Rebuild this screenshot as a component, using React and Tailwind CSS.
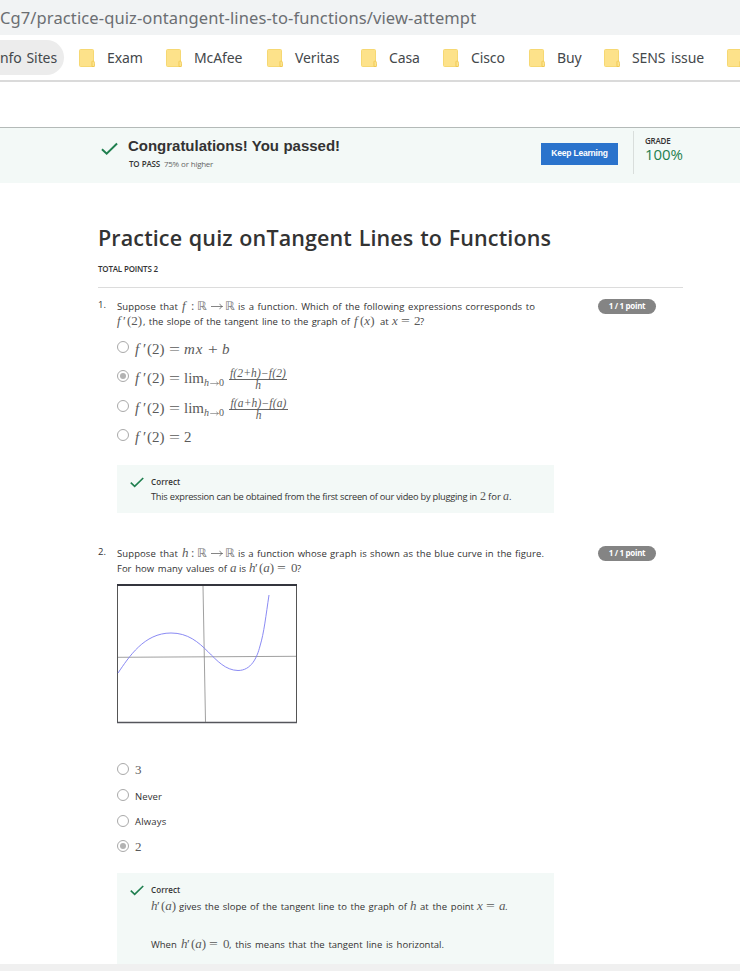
import React from "react";
import clsx from "clsx";

/* A run of words spread over a given width. */
const T = ({ w, className, children }) => (
  <span className={clsx("block shrink-0 whitespace-nowrap [text-align-last:justify]", w, className)}>{children}</span>
);

/* A math symbol: roman by default, italic for variables. */
const M = ({ w, i, className, children }) => (
  <span className={clsx("block shrink-0 whitespace-nowrap font-['Liberation_Serif',serif] text-[#5a5a5a]", i && "italic", w, className)}>
    {children}
  </span>
);

const R = ({ w }) => (
  <span className={clsx("-ml-px block shrink-0 font-['DejaVu_Sans',sans-serif] text-[12px] text-[#777]", w)}>ℝ</span>
);

const Arrow = ({ className }) => (
  <svg className={clsx("block shrink-0", className)} viewBox="0 0 12 7" fill="none" stroke="#666" strokeWidth="0.8">
    <path d="M0 3.5H11.5M8.8 0.8C9.3 2.4 10.2 3.1 11.5 3.5C10.2 3.9 9.3 4.6 8.8 6.2" />
  </svg>
);

const Line = ({ className, children }) => (
  <div className={clsx("flex items-baseline h-[15px] leading-[15px]", className)}>{children}</div>
);

const Check = ({ className }) => (
  <svg className={clsx("block shrink-0", className)} viewBox="0 0 18 14" fill="none" stroke="#1f7f4f" strokeWidth="2.1">
    <path d="M1 7.2L6 12L17 1.2" />
  </svg>
);

const Radio = ({ on }) => (
  <span className="flex size-[12px] shrink-0 items-center justify-center rounded-full border border-[#a9a9a9] bg-white">
    {on && <span className="size-[6px] rounded-full bg-[#b3b3b3]" />}
  </span>
);

const Option = ({ on, className = "h-[29px]", children }) => (
  <div className={clsx("flex items-start", className)}>
    <Radio on={on} />
    <div className="ml-[6px] flex items-baseline">{children}</div>
  </div>
);

const FPrime = () => (
  <>
    <M i w="w-[8px]">f</M>
    <M w="w-[4px]">′</M>
    <M w="w-[22px]">(2)</M>
    <M w="w-[15px]" className="origin-left scale-x-130">=</M>
  </>
);

const Limit = () => (
  <>
    <M w="w-[20px]">lim</M>
    <span className="flex w-[25px] items-center self-end pb-[3px]">
      <M i w="w-[6px]" className="text-[10px] leading-[8px]">h</M>
      <Arrow className="h-[5px] w-[9px]" />
      <M w="w-[6px]" className="text-[10px] leading-[8px]">0</M>
    </span>
  </>
);

const Fraction = ({ children, w }) => (
  <span className={clsx("-mt-[2px] flex shrink-0 flex-col items-center self-start font-['Liberation_Serif',serif] text-[11.5px] italic text-[#5a5a5a]", w)}>
    <span className="flex h-[12px] w-full justify-center whitespace-nowrap border-b border-[#666] leading-[11px] tracking-[0.15px]">{children}</span>
    <span className="h-[10px] leading-[10px]">h</span>
  </span>
);

const Points = () => (
  <div className="flex h-[15px] w-[58px] items-start justify-center rounded-full bg-[#848484] font-['Open_Sans',sans-serif] text-[8px] font-bold leading-[14px] tracking-[-0.3px] text-white">
    1 / 1 point
  </div>
);

const Folder = () => (
  <svg className="block h-[18px] w-[16px] shrink-0" viewBox="0 0 16 18">
    <rect x="0.5" y="0.5" width="14" height="17" rx="1" fill="#fde28a" stroke="#f6d873" />
    <path d="M13 17.5V13.2C13 12 14 11.5 14.8 12.2C15.5 13 15.6 15.5 15.3 17.5Z" fill="#fde793" stroke="#efc54c" strokeWidth="0.9" />
  </svg>
);

const Bookmark = ({ w, tw, children }) => (
  <div className={clsx("flex shrink-0 items-center", w)}>
    <Folder />
    <T w={tw} className="ml-[12px]">{children}</T>
  </div>
);

export default function App() {
  return (
    <div className="flex h-[971px] w-[740px] flex-col overflow-hidden bg-white font-['Open_Sans',sans-serif] text-[#333]">
      <div className="flex h-[35px] shrink-0 items-center bg-[#f1f3f4] pt-[2px] font-['Noto_Sans',sans-serif] text-[16.5px] text-[#6b6e72]">
        <T w="w-[477px]" className="tracking-[0.11px]">Cg7/practice-quiz-ontangent-lines-to-functions/view-attempt</T>
      </div>
      <div className="flex h-[47px] shrink-0 items-center border-b-2 border-[#dadada] font-['Noto_Sans',sans-serif] text-[14px] tracking-[-0.1px] text-[#44484b]">
        <div className="mr-[15px] flex h-[35px] w-[64px] shrink-0 items-center rounded-r-full bg-[#ececec]">
          <T w="w-[57px]">nfo Sites</T>
        </div>
        <Bookmark w="w-[87px]" tw="w-[35px]">Exam</Bookmark>
        <Bookmark w="w-[101px]" tw="w-[50px]">McAfee</Bookmark>
        <Bookmark w="w-[94px]" tw="w-[44px]">Veritas</Bookmark>
        <Bookmark w="w-[82px]" tw="w-[32px]">Casa</Bookmark>
        <Bookmark w="w-[86px]" tw="w-[35px]">Cisco</Bookmark>
        <Bookmark w="w-[75px]" tw="w-[25px]">Buy</Bookmark>
        <Bookmark w="w-[123px]" tw="w-[72px]">SENS issue</Bookmark>
        <Folder />
      </div>
      <div className="h-[45px] shrink-0" />
      <header className="flex h-[56px] shrink-0 items-start border-t border-[#b4bab8] bg-[#f3f9f7] pl-[101px]">
        <Check className="mt-[14px] h-[14px] w-[17px]" />
        <div className="ml-[10px] w-[413px] pt-[7px]">
          <T w="w-[212px]" className="font-['Liberation_Sans',sans-serif] text-[15px] font-bold leading-[22px] tracking-[-0.02px]">
            Congratulations! You passed!
          </T>
          <div className="ml-[1px] mt-px flex text-[8px] leading-[11px]">
            <T w="w-[31px]" className="font-semibold tracking-[-0.2px]">TO PASS</T>
            <T w="w-[49px]" className="ml-[4px] text-[#666] tracking-[-0.3px]">75% or higher</T>
          </div>
        </div>
        <button className="mt-[15px] flex h-[22px] w-[77px] items-start justify-center bg-[#2a73cc] font-['Liberation_Sans',sans-serif] text-[8.5px] font-bold leading-[21px] tracking-[-0.2px] text-white">
          Keep Learning
        </button>
        <div className="ml-[15px] mt-[3px] h-[43px] w-px bg-[#d9dedc]" />
        <div className="ml-[11px] pt-[7px]">
          <div className="h-[11px] text-[8px] font-semibold leading-[11px] tracking-[-0.2px]">GRADE</div>
          <div className="h-[17px] text-[15px] leading-[17px] tracking-[-0.1px] text-[#1f7f4f]">100%</div>
        </div>
      </header>

      <main className="flex h-[781px] shrink-0 flex-col pl-[98px]">
        <h1 className="mt-[40px] h-[30px]">
          <T w="w-[453px]" className="text-[21.5px] font-semibold leading-[30px] tracking-[0.12px]">Practice quiz onTangent Lines to Functions</T>
        </h1>
        <T w="w-[60px]" className="mt-[10px] h-[11px] text-[8px] font-semibold leading-[11px] tracking-[-0.2px]">TOTAL POINTS 2</T>
        <div className="mt-[13px] h-px w-[585px] shrink-0 bg-[#dcdcdc]" />

        <section className="flex h-[247px] shrink-0 pt-[11px] text-[9.5px]">
          <div className="w-[19px] leading-[12px]">1.</div>
          <div className="-mt-px w-[481px]">
            <Line>
              <T w="w-[61px]" className="tracking-[0.1px]">Suppose that</T>
              <M i w="w-[9px]" className="ml-[4px] text-[13px]">f</M>
              <M w="w-[7px]" className="text-[12px]">:</M>
              <R w="w-[14px]" />
              <Arrow className="h-[7px] w-[12px]" />
              <span className="w-[3px]" />
              <R w="w-[12px]" />
              <T w="w-[297px]" className="ml-px tracking-[0.1px]">is a function. Which of the following expressions corresponds to</T>
            </Line>
            <Line>
              <M i w="w-[6px]" className="text-[13px]">f</M>
              <M w="w-[4px]" className="text-[13px]">′</M>
              <M w="w-[16px]" className="text-[13px]">(2)</M>
              <T w="w-[207px]">, the slope of the tangent line to the graph of</T>
              <M i w="w-[6px]" className="ml-[4px] text-[13px]">f</M>
              <M w="w-[17px]" className="text-[13px]">(<i>x</i>)</M>
              <T w="w-[9px]" className="ml-[3px]">at</T>
              <M i w="w-[9px]" className="ml-[3px] text-[13px]">x</M>
              <M w="w-[13px]" className="origin-left scale-x-120 text-[13px]">=</M>
              <M w="w-[6px]" className="text-[13px]">2</M>
              <T w="w-[5px]">?</T>
            </Line>
            <div className="mt-[13px] flex flex-col text-[15px] leading-[16px]">
              <Option><FPrime /><M i w="w-[24px]" className="tracking-[1px]">mx</M><M w="w-[14px]" className="origin-left scale-x-115">+</M><M i w="w-[8px]">b</M></Option>
              <Option on className="h-[30px]">
                <FPrime />
                <Limit />
                <Fraction w="w-[58px]">f(2+h)−f(2)</Fraction>
              </Option>
              <Option>
                <FPrime />
                <Limit />
                <Fraction w="w-[59px]">f(a+h)−f(a)</Fraction>
              </Option>
              <Option><FPrime /><M w="w-[8px]">2</M></Option>
            </div>
            <div className="mt-[7px] flex h-[48px] w-[437px] bg-[#f3f9f7] pl-[13px] pt-[12px]">
              <Check className="h-[11px] w-[14px]" />
              <div className="ml-[7px]">
                <div className="-mt-px h-[13px] text-[8px] font-semibold leading-[11px] tracking-[0.1px]">Correct</div>
                <Line>
                  <T w="w-[326px]" className="text-[9.25px] tracking-[-0.25px]">This expression can be obtained from the first screen of our video by plugging in</T>
                  <M w="w-[6px]" className="ml-[3px] text-[12px]">2</M>
                  <T w="w-[13px]" className="ml-[2px]">for</T>
                  <M i w="w-[6px]" className="ml-[2px] text-[12px]">a</M>
                  <T w="w-[3px]">.</T>
                </Line>
              </div>
            </div>
          </div>
          <Points />
        </section>

        <section className="flex shrink-0 pt-[11px] text-[9.5px]">
          <div className="w-[19px] leading-[12px]">2.</div>
          <div className="-mt-px w-[481px]">
            <Line>
              <T w="w-[61px]" className="tracking-[0.1px]">Suppose that</T>
              <M i w="w-[9px]" className="ml-[4px] text-[13px]">h</M>
              <M w="w-[7px]" className="text-[12px]">:</M>
              <R w="w-[14px]" />
              <Arrow className="h-[7px] w-[12px]" />
              <span className="w-[3px]" />
              <R w="w-[12px]" />
              <T w="w-[306px]" className="ml-px tracking-[0.1px]">is a function whose graph is shown as the blue curve in the figure.</T>
            </Line>
            <Line>
              <T w="w-[110px]">For how many values of</T>
              <M i w="w-[6px]" className="ml-[3px] text-[13px]">a</M>
              <T w="w-[7px]" className="ml-[3px]">is</T>
              <M i w="w-[6px]" className="ml-[3px] text-[13px]">h</M>
              <M w="w-[4px]" className="text-[13px]">′</M>
              <M w="w-[18px]" className="text-[13px]">(<i>a</i>)</M>
              <M w="w-[14px]" className="origin-left scale-x-120 text-[13px]">=</M>
              <M w="w-[6px]" className="text-[13px]">0</M>
              <T w="w-[5px]">?</T>
            </Line>
            <svg className="mt-[9px] block h-[141px] w-[180px]" viewBox="0 0 180 141" fill="none">
              <path d="M0.5 1V139M179.5 1V139" stroke="#555" />
              <path d="M0 1H180" stroke="#34353d" strokeWidth="2" />
              <path d="M0 138.5H180" stroke="#55565c" strokeWidth="1.6" />
              <path d="M1 73.3L179 72.3M86 2L88.5 138" stroke="#888" strokeWidth="0.8" />
              <path d="M1 89C12 73 27 49 54 49C88 49 96 86 121 86.500C134 86.500 140 74 143 62C147 49 149 31 152 11" stroke="#7d7df2" strokeWidth="0.9" />
            </svg>
            <div className="mt-[38px] flex flex-col text-[9.5px] leading-[14px]">
              <Option className="h-[26px]"><M className="text-[13px]" w="w-[7px]">3</M></Option>
              <Option className="h-[26px]"><T w="w-[28px]" className="mt-px tracking-[0.1px]">Never</T></Option>
              <Option className="h-[25px]"><T w="w-[32px]" className="tracking-[0.2px]">Always</T></Option>
              <Option on className="h-[26px]"><M className="text-[13px]" w="w-[7px]">2</M></Option>
            </div>
            <div className="mt-[7px] flex h-[92px] w-[437px] bg-[#f3f9f7] pl-[13px] pt-[12px]">
              <Check className="h-[11px] w-[14px]" />
              <div className="ml-[7px]">
                <div className="-mt-px h-[14px] text-[8px] font-semibold leading-[11px] tracking-[0.1px]">Correct</div>
                <Line className="mb-[23px]">
                  <M i w="w-[6px]" className="text-[13px]">h</M>
                  <M w="w-[4px]" className="text-[13px]">′</M>
                  <M w="w-[15px]" className="text-[13px]">(<i>a</i>)</M>
                  <T w="w-[228px]" className="ml-[3px]">gives the slope of the tangent line to the graph of</T>
                  <M i w="w-[7px]" className="ml-[3px] text-[13px]">h</M>
                  <T w="w-[54px]" className="ml-[3px]">at the point</T>
                  <M i w="w-[9px]" className="ml-[3px] text-[13px]">x</M>
                  <M w="w-[13px]" className="origin-left scale-x-120 text-[13px]">=</M>
                  <M i w="w-[6px]" className="text-[13px]">a</M>
                  <T w="w-[3px]">.</T>
                </Line>
                <Line>
                  <T w="w-[27px]">When</T>
                  <M i w="w-[6px]" className="ml-[3px] text-[13px]">h</M>
                  <M w="w-[4px]" className="text-[13px]">′</M>
                  <M w="w-[18px]" className="text-[13px]">(<i>a</i>)</M>
                  <M w="w-[14px]" className="origin-left scale-x-120 text-[13px]">=</M>
                  <M w="w-[6px]" className="text-[13px]">0</M>
                  <T w="w-[215px]">, this means that the tangent line is horizontal.</T>
                </Line>
              </div>
            </div>
          </div>
          <Points />
        </section>
      </main>
      <div className="h-[7px] shrink-0 bg-[#f0f0f0]" />
    </div>
  );
}
